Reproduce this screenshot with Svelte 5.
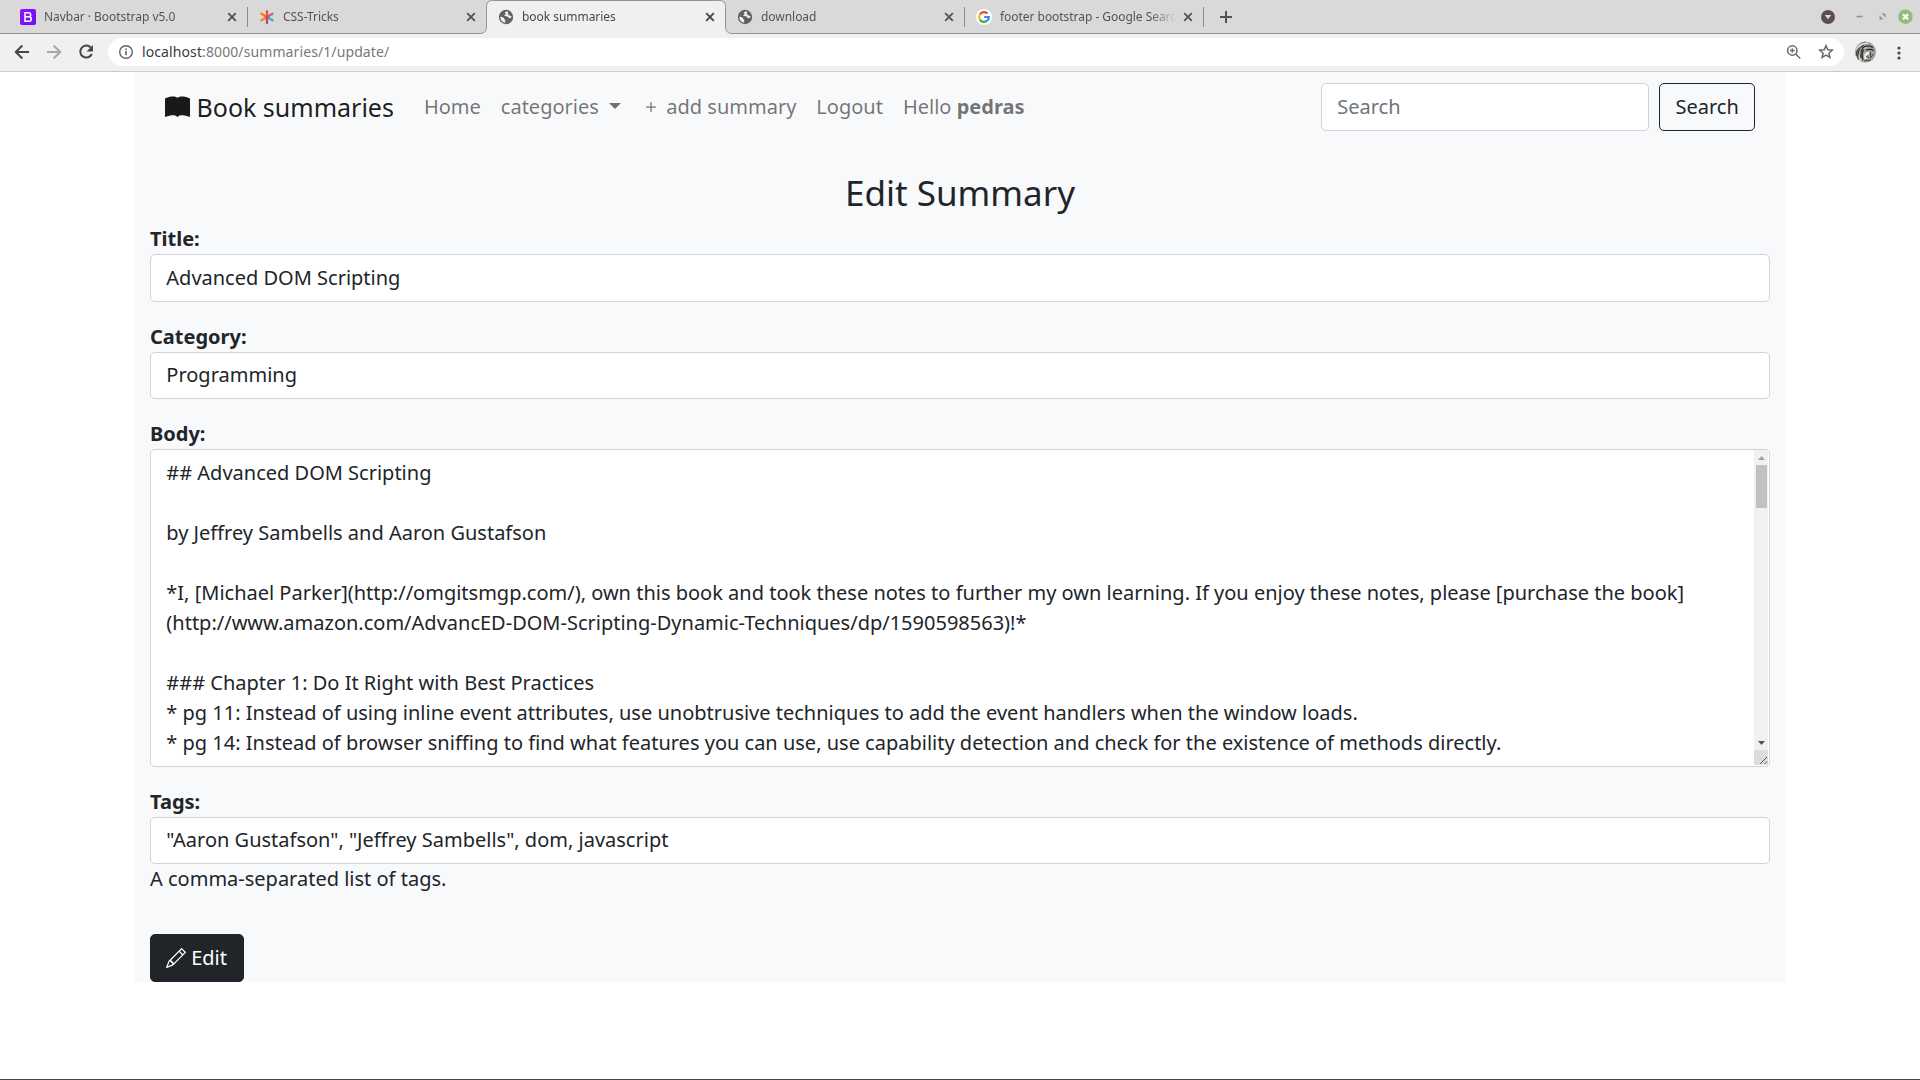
<script>
  const tabs = [
    { title: 'Navbar · Bootstrap v5.0', icon: 'bootstrap' },
    { title: 'CSS-Tricks', icon: 'star' },
    { title: 'book summaries', icon: 'globe', active: true },
    { title: 'download', icon: 'globe' },
    { title: 'footer bootstrap - Google Search', icon: 'google' }
  ];

  const body = `## Advanced DOM Scripting

by Jeffrey Sambells and Aaron Gustafson

*I, [Michael Parker](http://omgitsmgp.com/), own this book and took these notes to further my own learning. If you enjoy these notes, please [purchase the book]
(http://www.amazon.com/AdvancED-DOM-Scripting-Dynamic-Techniques/dp/1590598563)!*

### Chapter 1: Do It Right with Best Practices
* pg 11: Instead of using inline event attributes, use unobtrusive techniques to add the event handlers when the window loads.
* pg 14: Instead of browser sniffing to find what features you can use, use capability detection and check for the existence of methods directly.`;
</script>

<div class="window">
  <header class="tabstrip">
    {#each tabs as tab, i}
      <div class="tab" class:active={tab.active} class:plain={i === 1}>
        {#if tab.active}
          <svg class="shape" width="253" height="34" viewBox="0 0 253 34">
            <path d="M0 34V33.5C4 33.5 6.5 31 6.5 27V6.500Q6.500.5 12.500.5H239.500Q245.500.5 245.500 6.500V27C245.500 31 248 33.500 252 33.500V34Z" fill="#f0f0f0" />
            <path d="M0 33.500C4 33.500 6.500 31 6.500 27V6.500Q6.500.5 12.500.5H239.500Q245.500.5 245.500 6.500V27C245.500 31 248 33.500 252 33.500" fill="none" stroke="#989496" />
          </svg>
        {/if}
        <span class="favicon">
          {#if tab.icon === 'bootstrap'}
            <svg width="16" height="16" viewBox="0 0 16 16">
              <defs><linearGradient id="violet" x1="0" y1="0" x2="1" y2="1"><stop stop-color="#9013fb" /><stop offset="1" stop-color="#6610f2" /></linearGradient></defs>
              <rect width="16" height="16" rx="2" fill="url(#violet)" />
              <path d="M5 3.700h3.600a2 2 0 0 1 0 4.100H5zM5 7.800h4a2.200 2.200 0 0 1 0 4.500H5z" fill="none" stroke="#fff" stroke-width="1.500" />
            </svg>
          {:else if tab.icon === 'star'}
            <svg width="16" height="16" viewBox="0 0 16 16" fill="none" stroke-width="2.300" stroke-linecap="round">
              <path d="M8 8V2.200" stroke="#e4572e" /><path d="M8 8L2.400 4.800" stroke="#fb7a24" /><path d="M8 8L2.400 11.300" stroke="#f78424" />
              <path d="M8 8L13.500 4.800" stroke="#b9697b" /><path d="M8 8L13.500 11.300" stroke="#35b5c4" /><path d="M8 8v6" stroke="#a1527f" />
              <circle cx="8" cy="8" r="1.800" fill="#dd4052" />
            </svg>
          {:else if tab.icon === 'globe'}
            <svg width="16" height="16" viewBox="0 0 16 16">
              <circle cx="8" cy="8" r="7.200" fill="#5f6368" />
              <path d="M9.500 2.300C7 2.600 6.500 4 7.400 4.800 8.200 5.600 6.400 6 6.200 7c1.400.2 3.800-.1 4.300 1.600.4 1.200 1.800.8 2.600 0 .3 0 .4-.8.2-1.600-1.500.2-2-.3-1.800-1.200-1.700.2-2.200-.5-1.200-1.500zM2.300 7.800c1.800.2 3.500.6 3.700 1.700.1 1 1.500.8 1.200 1.900-.1.700-.2 1.300.2 2.200C4.200 13.500 2.300 11 2.300 7.800z" fill="#efefef" />
            </svg>
          {:else}
            <svg width="16" height="16" viewBox="0 0 16 16" fill="none" stroke-width="2.200">
              <circle cx="8" cy="8" r="8" fill="#fff" />
              <path d="M11.500 4.600A4.900 4.900 0 0 0 3.800 5.500" stroke="#ea4335" />
              <path d="M3.800 5.500A4.900 4.900 0 0 0 3.800 10.500" stroke="#fbbc05" />
              <path d="M3.800 10.500A4.900 4.900 0 0 0 11.200 11.700" stroke="#34a853" />
              <path d="M11.200 11.700A4.900 4.900 0 0 0 12.900 8H8.200" stroke="#4285f4" />
            </svg>
          {/if}
        </span>
        <span class="tab-title">{tab.title}</span>
        <svg class="close" width="10" height="10" viewBox="0 0 10 10"><path d="M1.200 1.200l7.600 7.600M8.800 1.200L1.200 8.800" stroke="currentColor" stroke-width="1.900" /></svg>
      </div>
    {/each}
    <svg class="plus" width="12" height="12" viewBox="0 0 12 12"><path d="M6 0v12M0 6h12" stroke="#5a5052" stroke-width="2" /></svg>
    <div class="controls">
      <svg width="100" height="20" viewBox="0 0 100 20">
        <circle cx="8" cy="10" r="7" fill="#5b4f52" /><path d="M4.800 8h6.400L8 12.300z" fill="#e0dddd" />
        <path d="M36.500 9.500h6" stroke="#8c929b" stroke-width="1.500" />
        <path d="M61.500 6.500h4v4zM59.500 8.500v4h4z" fill="#8c929b" />
        <circle cx="85.500" cy="9.700" r="7.200" fill="#96bb78" /><path d="M83 7.200l5 5m0-5l-5 5" stroke="#fff" stroke-width="2.200" />
      </svg>
    </div>
  </header>

  <div class="toolbar">
    <svg class="nav-icons" width="108" height="37" viewBox="0 0 108 37" fill="none" stroke-width="2">
      <path d="M29 18H16M22.300 11.500L15.800 18l6.500 6.500" stroke="#4a4648" />
      <path d="M47 18h13M53.700 11.500l6.500 6.500-6.500 6.500" stroke="#a9a7a8" />
      <path d="M90.700 13.500A6 6 0 1 0 91.800 20" stroke="#4a4648" /><path d="M93 11v6.500h-6.500z" fill="#4a4648" />
    </svg>
    <div class="omnibox">
      <svg width="16" height="16" viewBox="0 0 16 16"><circle cx="8" cy="8" r="6.300" fill="none" stroke="#5f6368" stroke-width="1.400" /><path d="M8 7v4.200M8 4.500V6" stroke="#5f6368" stroke-width="1.600" /></svg>
      <span class="url"><b>localhost</b>:8000/summaries/1/update/</span>
      <svg class="box-icons" width="50" height="18" viewBox="0 0 50 18" fill="none" stroke="#6a6769" stroke-width="1.500">
        <circle cx="6.300" cy="7.500" r="4.700" /><path d="M9.800 11l4.500 4.500M6.300 5.200v4.600M4 7.500h4.600" stroke-width="1.300" />
        <path d="M40 2.700l1.800 4.100 4.500.4-3.400 3 1 4.300-3.900-2.300-3.900 2.300 1-4.300-3.400-3 4.500-.4z" />
      </svg>
    </div>
    <svg class="avatar" width="21" height="22" viewBox="0 0 21 22">
      <clipPath id="face"><circle cx="10.500" cy="11" r="10.500" /></clipPath>
      <g clip-path="url(#face)" fill="none">
        <rect width="21" height="22" fill="#a0a09c" />
        <path d="M1 15Q2 3 11 1M3 20Q1 8 9 4" stroke="#3b3b3a" stroke-width="1.200" />
        <path d="M5 20Q4 9 11 6M1 9Q5 2 13 2" stroke="#e0e0dc" stroke-width="1.300" />
        <path d="M7.500 7Q13 3 18 6.500M11 9q4-1.500 8 .5M8 19Q6 12 9 8M6 17Q5 11 8 7" stroke="#292929" stroke-width="1.200" />
        <path d="M10.500 18q-1-6 3.500-6" stroke="#f1f1ed" stroke-width="2.500" />
        <path d="M15.500 11v6l3-4M11 15l3 2M9 20l7-1" stroke="#444" />
      </g>
    </svg>
    <svg class="dots" width="4" height="14" viewBox="0 0 4 14" fill="#4a4648"><circle cx="2" cy="2" r="1.600" /><circle cx="2" cy="7" r="1.600" /><circle cx="2" cy="12" r="1.600" /></svg>
  </div>

  <main class="page">
    <nav class="navbar">
      <a class="brand" href="#home">
        <svg width="25" height="25" viewBox="0 0 16 16" fill="currentColor"><path d="M8 1.783C7.015.936 5.587.81 4.287.94c-1.514.153-3.042.672-3.994 1.105A.5.5 0 0 0 0 2.500v11a.5.5 0 0 0 .707.455c.882-.4 2.303-.881 3.680-1.020 1.409-.142 2.590.087 3.223.877a.5.5 0 0 0 .78 0c.633-.79 1.814-1.019 3.222-.877 1.378.139 2.800.62 3.681 1.020A.5.5 0 0 0 16 13.500v-11a.5.5 0 0 0-.293-.455c-.952-.433-2.480-.952-3.994-1.105C10.413.809 8.985.936 8 1.783z" /></svg>
        Book summaries
      </a>
      <a class="link" href="#home">Home</a>
      <a class="link dropdown" href="#categories">categories</a>
      <a class="link" href="#add"><svg width="20" height="20" viewBox="0 0 16 16" fill="currentColor"><path d="M8 4a.5.5 0 0 1 .5.5v3h3a.5.5 0 0 1 0 1h-3v3a.5.5 0 0 1-1 0v-3h-3a.5.5 0 0 1 0-1h3v-3A.5.5 0 0 1 8 4z" /></svg> add summary</a>
      <a class="link" href="#logout">Logout</a>
      <a class="link" href="#profile">Hello <strong>pedras</strong></a>
      <form class="search">
        <input class="control" type="text" placeholder="Search" />
        <button class="btn outline" type="button">Search</button>
      </form>
    </nav>

    <h3>Edit Summary</h3>
    <form class="form">
      <div class="field first">
        <label for="title">Title:</label>
        <input id="title" class="control" value="Advanced DOM Scripting" />
      </div>
      <div class="field">
        <label for="category">Category:</label>
        <input id="category" class="control" value="Programming" />
      </div>
      <div class="field">
        <label for="body">Body:</label>
        <div id="body" class="control editor">
          <div class="text">{body}</div>
          <div class="scrollbar">
            <svg width="14" height="15" viewBox="0 0 14 15"><path d="M4 10h7L7.500 6z" fill="#a3a3a3" /></svg>
            <span class="thumb"></span>
            <svg class="down" width="14" height="15" viewBox="0 0 14 15"><path d="M4 6h7L7.500 10z" fill="#505050" /></svg>
            <svg class="grip" width="14" height="15" viewBox="0 0 14 15"><path d="M6 14l7-7M10.500 14l2.500-2.500" stroke="#555" /></svg>
          </div>
        </div>
      </div>
      <div class="field last">
        <label for="tags">Tags:</label>
        <input id="tags" class="control" value={'"Aaron Gustafson", "Jeffrey Sambells", dom, javascript'} />
        <span class="help">A comma-separated list of tags.</span>
      </div>
      <button class="btn dark" type="button">
        <svg width="20" height="20" viewBox="0 0 16 16" fill="currentColor"><path d="M12.146.146a.5.5 0 0 1 .708 0l3 3a.5.5 0 0 1 0 .708l-10 10a.5.5 0 0 1-.168.110l-5 2a.5.5 0 0 1-.65-.65l2-5a.5.5 0 0 1 .11-.168l10-10zM11.207 2.500L13.500 4.793 14.793 3.500 12.500 1.207 11.207 2.500zm1.586 3L10.500 3.207 4 9.707V10h.5a.5.5 0 0 1 .5.5v.5h.5a.5.5 0 0 1 .5.5v.5h.293l6.500-6.500zm-9.761 5.175l-.106.106-1.528 3.821 3.821-1.528.106-.106A.5.5 0 0 1 5 12.500V12h-.5a.5.5 0 0 1-.5-.5V11h-.5a.5.5 0 0 1-.468-.325z" /></svg>
        Edit
      </button>
    </form>
  </main>
  <div class="edge"></div>
</div>

<style>
  :global(body) { margin: 0; background: #fff; }
  * { box-sizing: border-box; }
  .window {
    display: flex;
    flex-direction: column;
    width: 1920px;
    height: 1080px;
    overflow: hidden;
    font: 20px/30px 'Noto Sans', sans-serif;
    color: #212529;
  }
  .tabstrip {
    display: flex;
    align-items: center;
    height: 34px;
    padding-left: 8px;
    background: #d9d9d9;
    border-bottom: 1px solid #989496;
  }
  .tab {
    position: relative;
    display: flex;
    align-items: center;
    width: 239px;
    height: 33px;
    padding: 0 10px 0 12px;
    font-size: 12px;
    line-height: 18px;
    letter-spacing: -0.04px;
    color: #5b5153;
  }
  .tab::after {
    content: '';
    position: absolute;
    right: -1px;
    top: 7px;
    width: 1px;
    height: 20px;
    background: #8f8a8c;
  }
  .tab.plain::after, .tab.active::after { display: none; }
  .tab.active { color: #4a4648; }
  .shape { position: absolute; left: -6px; top: 0; }
  .favicon { position: relative; display: flex; margin-right: 8px; }
  .tab-title {
    position: relative;
    flex: 1;
    overflow: hidden;
    white-space: nowrap;
    margin-right: 8px;
    mask-image: linear-gradient(to right, #000 150px, transparent 177px);
  }
  .close { position: relative; }
  .plus { margin-left: 17px; }
  .controls { display: flex; margin-left: auto; }
  .toolbar {
    display: flex;
    align-items: center;
    flex: none;
    height: 38px;
    background: #f0f0f0;
    border-bottom: 1px solid #cbcbcb;
  }
  .omnibox {
    display: flex;
    align-items: center;
    width: 1736px;
    height: 28px;
    margin-bottom: 1px;
    padding: 0 8px 0 10px;
    background: #fff;
    border-radius: 14px;
  }
  .url { margin-left: 8px; font-size: 14px; line-height: 20px; letter-spacing: 0.1px; color: #77787a; }
  .url b { font-weight: 400; color: #3b3b3d; }
  .box-icons { margin-left: auto; }
  .avatar { margin: 0 0 1px 11px; }
  .dots { margin-left: 20.5px; }
  .page {
    width: 1650px;
    height: 910px;
    margin: 0 auto;
    padding: 0 15px;
    background: #f8f9fb;
  }
  .navbar {
    display: flex;
    align-items: center;
    height: 70px;
    padding: 0 15px;
  }
  .navbar a { color: rgba(0, 0, 0, 0.55); text-decoration: none; white-space: nowrap; }
  .navbar .brand { margin-right: 20px; padding-top: 0.5px; font-size: 25px; line-height: 37.5px; color: rgba(0, 0, 0, 0.9); }
  a svg, .btn svg { vertical-align: -0.125em; }
  .link { padding: 10px; }
  .dropdown::after {
    content: '';
    display: inline-block;
    margin-left: 10.3px;
    vertical-align: 5.1px;
    border-top: 6px solid;
    border-right: 6px solid transparent;
    border-left: 6px solid transparent;
  }
  .search { display: flex; gap: 10px; margin-left: auto; }
  .search .control { width: 328px; height: 48px; padding-left: 15.5px; }
  .control {
    display: block;
    width: 100%;
    height: 47px;
    padding: 6px 15px 8px 15.3px;
    font: inherit;
    color: #212529;
    background: #fff;
    border: 1px solid #ced4da;
    border-radius: 5px;
    outline: none;
  }
  .control::placeholder { color: #6c757d; opacity: 1; }
  .btn {
    height: 48px;
    padding: 0 15.5px;
    font: inherit;
    border: 1px solid #212529;
    border-radius: 5px;
    white-space: nowrap;
  }
  .outline { padding: 0 15.2px 0 15.8px; background: transparent; color: #212529; }
  .dark { padding: 0 16px 0 15px; background: #212529; color: #fff; }
  h3 {
    margin: 30px 0 10px;
    font-size: 35px;
    line-height: 42px;
    font-weight: 400;
    text-align: center;
  }
  .form { margin: 0; }
  .field { margin-bottom: 20px; }
  .field label { display: block; height: 30px; font-weight: 700; line-height: 30px; }
  .first .control { height: 48px; padding-top: 7px; padding-bottom: 8px; }
  .field.last { margin-bottom: 40px; }
  .help { display: block; }
  .editor { display: flex; height: 318px; padding: 0 1px 1px 15.3px; overflow: hidden; }
  .text { flex: 1; padding-top: 8px; white-space: pre; }
  .scrollbar { display: flex; flex-direction: column; width: 14px; background: #f1f1f1; }
  .thumb { width: 11px; height: 43px; margin-left: 2px; background: #c1c1c1; }
  .down { margin-top: auto; }
  .grip { background: #dcdcdc; }
  .edge { height: 1px; margin-top: auto; background: #444; }
</style>
